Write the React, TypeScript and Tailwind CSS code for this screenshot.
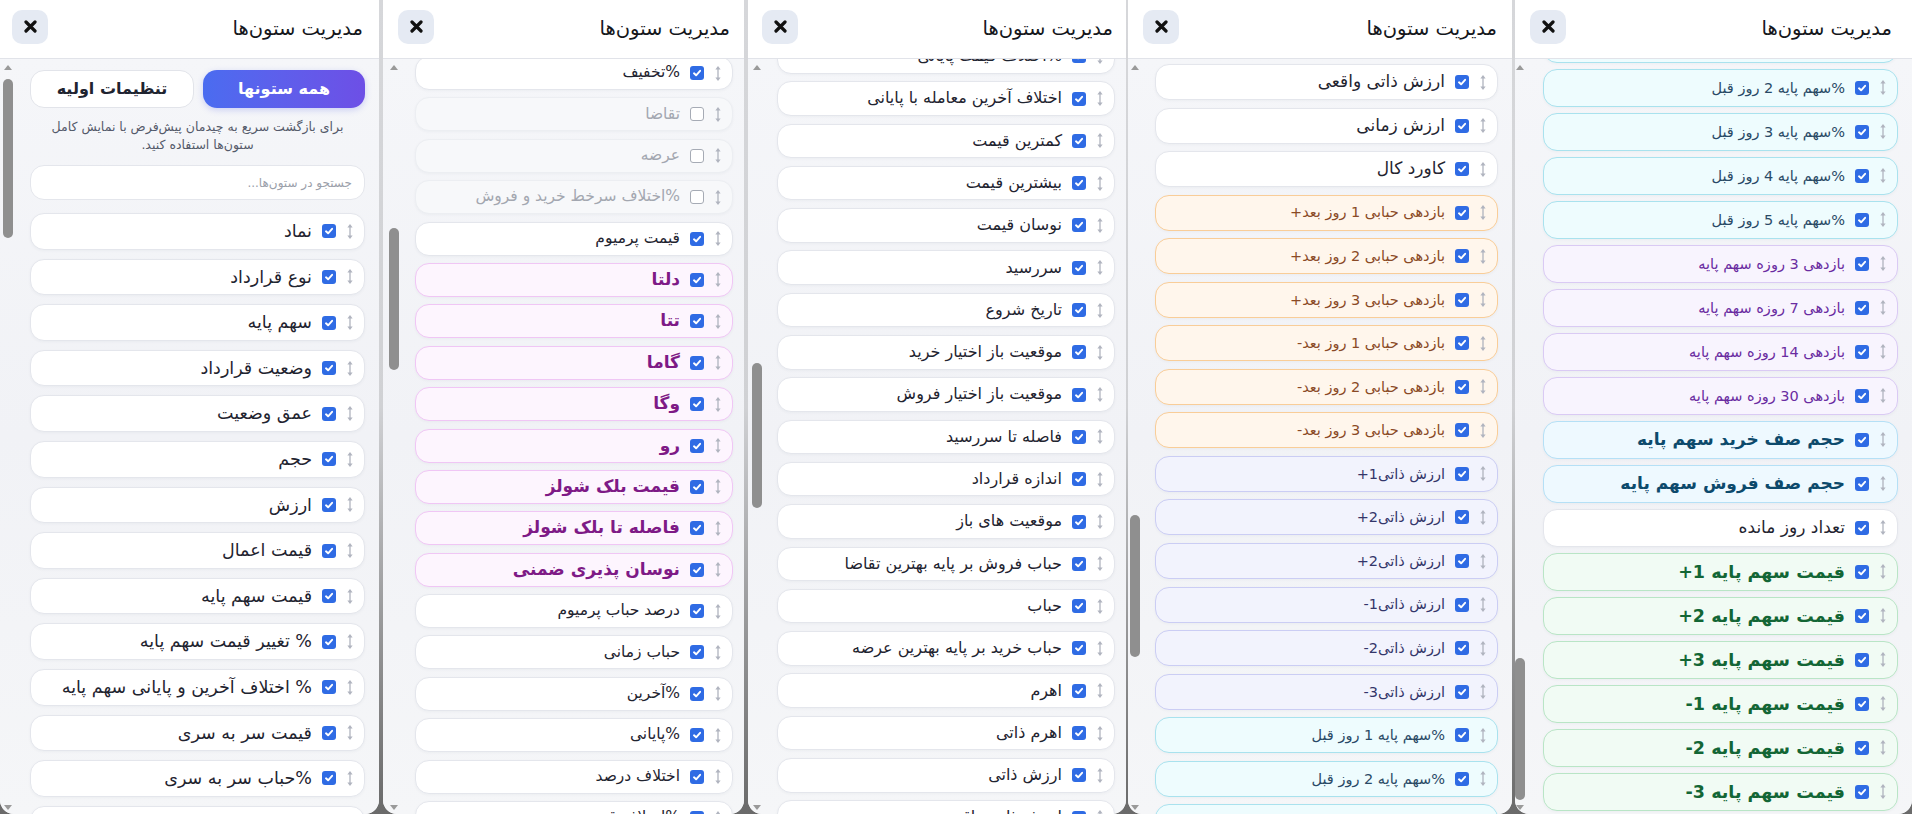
import React from "react";
import clsx from "clsx";

type Kind = "def" | "off" | "pink" | "orange" | "indigo" | "cyan" | "violet" | "sky" | "green";
type Item = { t: string; k?: Kind };

const kinds: Record<Kind, { row: string; text: string }> = {
  def: { row: "bg-white border-[#e4e6ec]", text: "text-[#1f2430]" },
  off: { row: "bg-[#f7f8fa] border-[#eceef2]", text: "text-[#a3a7b0]" },
  pink: { row: "bg-[#fdf5fe] border-[#f0c6f5]", text: "text-[#7e1a86] font-bold text-[17px]" },
  orange: { row: "bg-[#fff6ec] border-[#f9cd98]", text: "text-[#8a4a26] text-[14.5px]" },
  indigo: { row: "bg-[#f2f3fd] border-[#cbcdf4]", text: "text-[#34366a] text-[14.5px]" },
  cyan: { row: "bg-[#eefcfe] border-[#a9e2ee]", text: "text-[#2a4a66] text-[14.5px]" },
  violet: { row: "bg-[#f8f4fe] border-[#dacaf4]", text: "text-[#6a2ca1] text-[14.5px]" },
  sky: { row: "bg-[#eef9ff] border-[#b5e0f6]", text: "text-[#0d4a6c] font-bold text-[17px]" },
  green: { row: "bg-[#f1fbf4] border-[#b9e5c6]", text: "text-[#136635] font-bold text-[17.5px]" },
};

function Handle() {
  return (
    <svg width="8" height="17" viewBox="0 0 8 17" className="shrink-0">
      <path d="M4 3.5v10" stroke="#b0b4bf" strokeWidth="1.3" />
      <path d="M1.4 4.6 4 1 6.6 4.6z" fill="#b0b4bf" />
      <path d="M1.4 12.4 4 16 6.6 12.4z" fill="#b0b4bf" />
    </svg>
  );
}

function Check({ on }: { on: boolean }) {
  if (!on) return <span className="w-[14px] h-[14px] shrink-0 rounded-[3px] border border-[#a6abb5] bg-white" />;
  return (
    <span className="w-[14px] h-[14px] shrink-0 rounded-[3px] bg-[#2f6be4] flex items-center justify-center">
      <svg width="10" height="10" viewBox="0 0 10 10" fill="none" stroke="#fff" strokeWidth="1.9" strokeLinecap="round" strokeLinejoin="round">
        <path d="M2 5.3 4.1 7.3 8.1 2.8" />
      </svg>
    </span>
  );
}

function Row({ item, h, size }: { item: Item; h: string; size: string }) {
  const k = kinds[item.k ?? "def"];
  const plain = !item.k || item.k === "def" || item.k === "off";
  return (
    <div dir="rtl" className={clsx("flex items-center gap-[10px] shrink-0 rounded-[14px] border pr-[10px] shadow-[0_1px_3px_rgba(30,40,80,0.04)]", h, k.row)}>
      <Handle />
      <Check on={item.k !== "off"} />
      <span className={clsx("whitespace-nowrap leading-[1.4]", k.text, plain && size)}>{item.t}</span>
    </div>
  );
}

type PanelCfg = {
  w: string;
  xBtn: string;
  titleR: string;
  bar: string;
  thumb: string;
  list: string;
  rowH: string;
  size: string;
  items: Item[];
  top?: boolean;
};

const p1: Item[] = [
  "نماد", "نوع قرارداد", "سهم پایه", "وضعیت قرارداد", "عمق وضعیت", "حجم", "ارزش", "قیمت اعمال", "قیمت سهم پایه",
  "% تغییر قیمت سهم پایه", "% اختلاف آخرین و پایانی سهم پایه", "قیمت سر به سری", "%حباب سر به سری", "%کال",
].map((t) => ({ t }));

const p2: Item[] = [
  { t: "%تخفیف" },
  { t: "تقاضا", k: "off" },
  { t: "عرضه", k: "off" },
  { t: "%اختلاف سرخط خرید و فروش", k: "off" },
  { t: "قیمت پرمیوم" },
  ...["دلتا", "تتا", "گاما", "وگا", "رو", "قیمت بلک شولز", "فاصله تا بلک شولز", "نوسان پذیری ضمنی"].map((t) => ({ t, k: "pink" as Kind })),
  { t: "درصد حباب پرمیوم" },
  { t: "حباب زمانی" },
  { t: "%آخرین" },
  { t: "%پایانی" },
  { t: "اختلاف درصد" },
  { t: "%اختلاف قیمت" },
];

const p3: Item[] = [
  "%اختلاف قیمت پایانی", "اختلاف آخرین معامله با پایانی", "کمترین قیمت", "بیشترین قیمت", "نوسان قیمت", "سررسید", "تاریخ شروع",
  "موقعیت باز اختیار خرید", "موقعیت باز اختیار فروش", "فاصله تا سررسید", "اندازه قرارداد", "موقعیت های باز",
  "حباب فروش بر پایه بهترین تقاضا", "حباب", "حباب خرید بر پایه بهترین عرضه", "اهرم", "اهرم ذاتی", "ارزش ذاتی", "ارزش ذاتی واقعی",
].map((t) => ({ t }));

const p4: Item[] = [
  { t: "ارزش ذاتی واقعی" },
  { t: "ارزش زمانی" },
  { t: "کاورد کال" },
  ...["بازدهی حبابی 1 روز بعد+", "بازدهی حبابی 2 روز بعد+", "بازدهی حبابی 3 روز بعد+", "بازدهی حبابی 1 روز بعد-", "بازدهی حبابی 2 روز بعد-", "بازدهی حبابی 3 روز بعد-"].map((t) => ({ t, k: "orange" as Kind })),
  ...["ارزش ذاتی1+", "ارزش ذاتی2+", "ارزش ذاتی2+", "ارزش ذاتی1-", "ارزش ذاتی2-", "ارزش ذاتی3-"].map((t) => ({ t, k: "indigo" as Kind })),
  ...["%سهم پایه 1 روز قبل", "%سهم پایه 2 روز قبل", "%سهم پایه 3 روز قبل"].map((t) => ({ t, k: "cyan" as Kind })),
];

const p5: Item[] = [
  ...["%سهم پایه 1 روز قبل", "%سهم پایه 2 روز قبل", "%سهم پایه 3 روز قبل", "%سهم پایه 4 روز قبل", "%سهم پایه 5 روز قبل"].map((t) => ({ t, k: "cyan" as Kind })),
  ...["بازدهی 3 روزه سهم پایه", "بازدهی 7 روزه سهم پایه", "بازدهی 14 روزه سهم پایه", "بازدهی 30 روزه سهم پایه"].map((t) => ({ t, k: "violet" as Kind })),
  { t: "حجم صف خرید سهم پایه", k: "sky" },
  { t: "حجم صف فروش سهم پایه", k: "sky" },
  { t: "تعداد روز مانده" },
  ...["قیمت سهم پایه 1+", "قیمت سهم پایه 2+", "قیمت سهم پایه 3+", "قیمت سهم پایه 1-", "قیمت سهم پایه 2-", "قیمت سهم پایه 3-"].map((t) => ({ t, k: "green" as Kind })),
];

const panels: PanelCfg[] = [
  { w: "w-[379px]", xBtn: "ml-[12px]", titleR: "mr-[16px]", bar: "left-[3px]", thumb: "top-[20px] h-[159px]", list: "pl-[30px] pr-[14px] pt-[11px] gap-[9.1px]", rowH: "h-[36.5px]", size: "text-[17.5px]", items: p1, top: true },
  { w: "w-[361px]", xBtn: "ml-[15px]", titleR: "mr-[14px]", bar: "left-[6px]", thumb: "top-[169px] h-[142px]", list: "pl-[32px] pr-[11px] mt-[-3px] gap-[7.4px]", rowH: "h-[34px]", size: "text-[15.5px]", items: p2 },
  { w: "w-[378px]", xBtn: "ml-[14px]", titleR: "mr-[13px]", bar: "left-[4px]", thumb: "top-[304px] h-[145px]", list: "pl-[29px] pr-[11px] mt-[-20px] gap-[7.8px]", rowH: "h-[34.5px]", size: "text-[16px]", items: p3 },
  { w: "w-[384px]", xBtn: "ml-[15px]", titleR: "mr-[15px]", bar: "left-[2px]", thumb: "top-[456px] h-[142px]", list: "pl-[27px] pr-[14px] mt-[5px] gap-[7.56px]", rowH: "h-[36px]", size: "text-[17px]", items: p4 },
  { w: "w-[397px]", xBtn: "ml-[15px]", titleR: "mr-[20px]", bar: "left-[0px]", thumb: "top-[599px] h-[142px]", list: "pl-[28px] pr-[14px] mt-[-34px] gap-[6.5px]", rowH: "h-[37.5px]", size: "text-[17px]", items: p5 },
];

function TopControls() {
  return (
    <div className="flex flex-col">
      <div className="flex gap-[9px] h-[38px]">
        <button className="flex-1 rounded-[14px] border border-[#e2e4ea] bg-white text-[16px] font-bold text-[#1f2430]">تنظیمات اولیه</button>
        <button className="flex-1 rounded-[14px] bg-gradient-to-r from-[#4a6cf0] to-[#6d4fe6] text-[16px] font-bold text-white shadow-[0_2px_6px_rgba(80,90,230,0.25)]">همه ستونها</button>
      </div>
      <p dir="rtl" className="mt-[10px] px-[14px] text-center text-[12.5px] leading-[18px] font-medium text-[#545a6a]">
        برای بازگشت سریع به چیدمان پیش‌فرض با نمایش کامل ستون‌ها استفاده کنید.
      </p>
      <div dir="rtl" className="mt-[11px] h-[35px] rounded-[14px] border border-[#e4e6ec] bg-white flex items-center pr-[12px] text-[12px] text-[#9ba0aa]">
        جستجو در ستون‌ها...
      </div>
      <div className="h-[4px]" />
    </div>
  );
}

function Panel({ cfg }: { cfg: PanelCfg }) {
  return (
    <section className={clsx("h-full shrink-0 flex flex-col overflow-hidden rounded-b-[14px] bg-[#f3f4f7]", cfg.w)}>
      <header className="h-[59px] shrink-0 bg-white border-b border-[#e1e3e9] flex items-center justify-between">
        <button className={clsx("w-[36px] h-[34px] rounded-[10px] bg-[#e5eaf3] flex items-center justify-center mb-[5px]", cfg.xBtn)}>
          <svg width="13" height="13" viewBox="0 0 13 13" stroke="#111" strokeWidth="3.2" strokeLinecap="round">
            <path d="M2 2l9 9M11 2l-9 9" />
          </svg>
        </button>
        <h2 dir="rtl" className={clsx("text-[19.5px] leading-[1.4] text-[#15171c]", cfg.titleR)}>مدیریت ستون‌ها</h2>
      </header>
      <div className="relative flex-1 overflow-hidden bg-gradient-to-b from-[#f5f6f9] via-[#f1f2f6] to-[#f5f6f8]">
        <div className={clsx("flex flex-col", cfg.list)}>
          {cfg.top && <TopControls />}
          {cfg.items.map((it, i) => (
            <Row key={i} item={it} h={cfg.rowH} size={cfg.size} />
          ))}
        </div>
        <div className={clsx("absolute top-0 bottom-0 w-[10px]", cfg.bar)}>
          <svg width="10" height="7" viewBox="0 0 10 7" className="absolute top-[5px] left-0">
            <path d="M1 6 5 1 9 6z" fill="#9a9a9a" />
          </svg>
          <div className={clsx("absolute left-0 w-[10px] rounded-full bg-[#8f8f8f]", cfg.thumb)} />
          <svg width="10" height="7" viewBox="0 0 10 7" className="absolute bottom-[3px] left-0">
            <path d="M1 1 5 6 9 1z" fill="#9a9a9a" />
          </svg>
        </div>
      </div>
    </section>
  );
}

export default function App() {
  return (
    <div className="w-[1932px] h-[814px] flex bg-white overflow-hidden" style={{ fontFamily: '"DejaVu Sans", "Noto Sans", sans-serif' }}>
      <div className="flex h-full bg-gradient-to-b from-[#d6d7da] via-[#d0d1d4] to-[#6a6a6a]">
        <Panel cfg={panels[0]} />
        <div className="w-[4px]" />
        <Panel cfg={panels[1]} />
        <div className="w-[4px]" />
        <Panel cfg={panels[2]} />
        <div className="w-[2px]" />
        <Panel cfg={panels[3]} />
        <div className="w-[3px]" />
        <Panel cfg={panels[4]} />
      </div>
    </div>
  );
}
